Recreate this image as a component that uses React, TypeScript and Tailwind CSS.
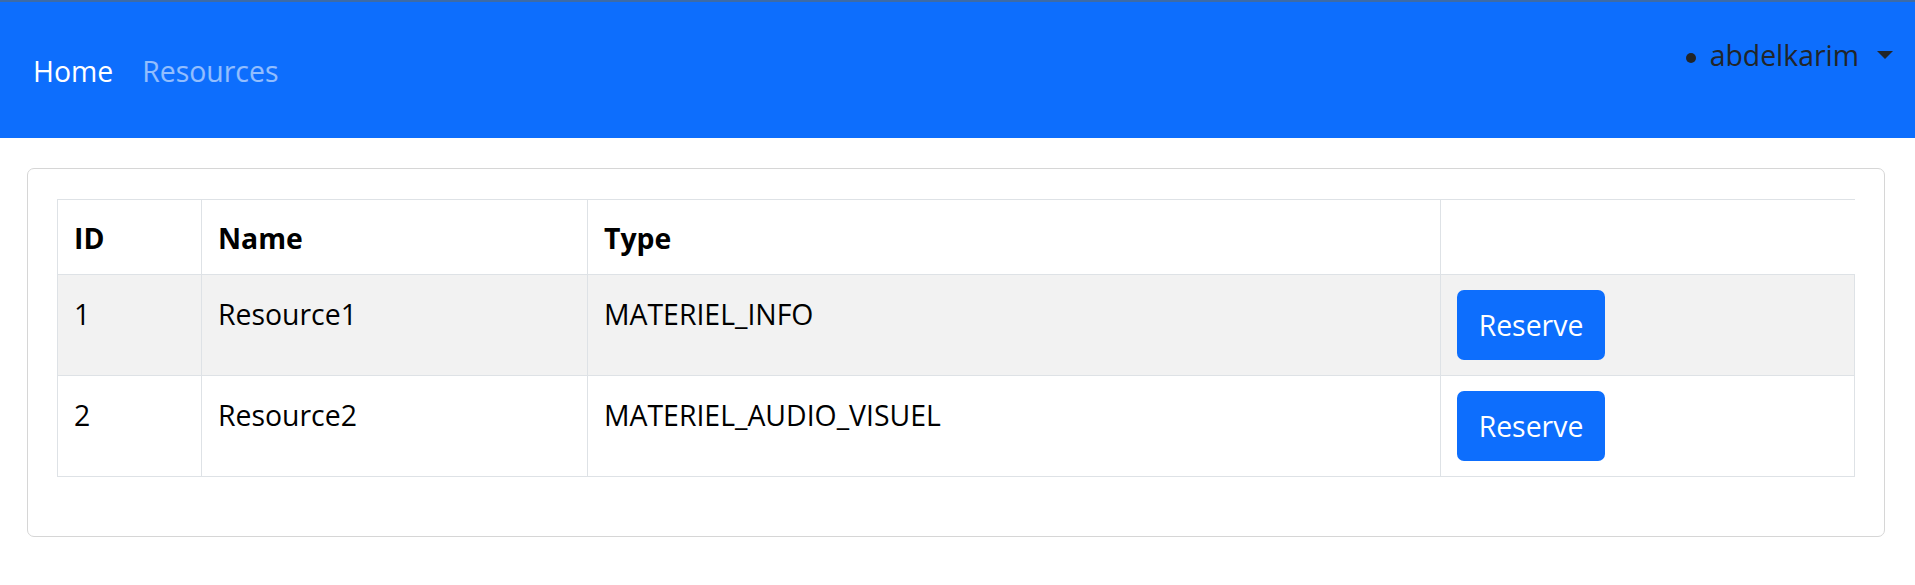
import React from "react";

const resources = [
  { id: 1, name: "Resource1", type: "MATERIEL_INFO" },
  { id: 2, name: "Resource2", type: "MATERIEL_AUDIO_VISUEL" },
];

const App: React.FC = () => {
  return (
    <div className="min-h-screen bg-white font-['Open_Sans',sans-serif] text-[28.4px] leading-[43.2px]">
      <div className="h-[2px] bg-[#3d6ba6]" />
      <nav className="h-[136px] bg-[#0d6efd] flex items-start justify-between">
        <ul className="flex items-center gap-[29px] pl-[33px] mt-[48px]">
          <li className="text-white">Home</li>
          <li className="text-white/55">Resources</li>
        </ul>
        <ul className="flex mt-[32px] pr-[22px] text-[#212529]">
          <li className="flex items-start">
            <span className="mt-[19px] w-[10px] h-[10px] rounded-full bg-[#212529] mr-[14px]" />
            <span>abdelkarim</span>
            <span className="ml-[18px] mt-[17px] w-0 h-0 border-t-[8px] border-t-[#212529] border-x-[8.5px] border-x-transparent" />
          </li>
        </ul>
      </nav>

      <main className="ml-[27px] mr-[30px] mt-[30px]">
        <div className="border border-[#d6d6d6] rounded-[7px] px-[29px] pt-[30px] pb-[30px]">
          <table className="w-full table-fixed border-collapse mb-[29px] text-black">
            <thead>
              <tr className="border-y border-[#dee2e6]">
                <th className="w-[144px] border-x border-[#dee2e6] px-[16px] pt-[17px] pb-[14px] text-left font-bold">ID</th>
                <th className="w-[386px] border-x border-[#dee2e6] px-[16px] pt-[17px] pb-[14px] text-left font-bold">Name</th>
                <th className="w-[853px] border-x border-[#dee2e6] px-[16px] pt-[17px] pb-[14px] text-left font-bold">Type</th>
                <th className="border-l border-[#dee2e6]" />
              </tr>
            </thead>
            <tbody>
              {resources.map((r, i) => (
                <tr key={r.id} className={`border border-[#dee2e6] ${i % 2 === 0 ? "bg-[#f2f2f2]" : "bg-white"}`}>
                  <td className="border border-[#dee2e6] px-[16px] pt-[18px] pb-[12px] align-top">{r.id}</td>
                  <td className="border border-[#dee2e6] px-[16px] pt-[18px] pb-[12px] align-top">{r.name}</td>
                  <td className="border border-[#dee2e6] px-[16px] pt-[18px] pb-[12px] align-top">{r.type}</td>
                  <td className="border border-[#dee2e6] px-[16px] pt-[15px] pb-[15px] align-top">
                    <button className="w-[148px] h-[70px] rounded-[7px] bg-[#0d6efd] text-white">Reserve</button>
                  </td>
                </tr>
              ))}
            </tbody>
          </table>
        </div>
      </main>
    </div>
  );
};

export default App;
